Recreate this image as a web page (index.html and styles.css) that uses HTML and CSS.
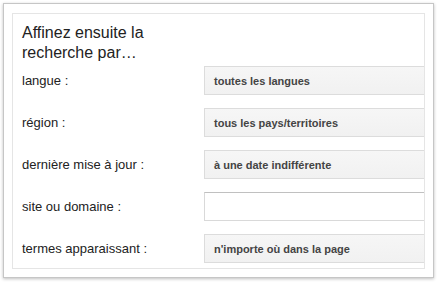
FILE: index.html
```html
<html>
<head>
    <link rel="stylesheet" href="styles.css">
</head>
<body>
<div class='frame'>
    <div class='panel'>
        <h2 class='title'>Affinez ensuite la<br>recherche par…</h2>
        <div class='rows'>
            <div class='label'>langue :</div>
            <div class='select'>toutes les langues</div>

            <div class='label'>région :</div>
            <div class='select'>tous les pays/territoires</div>

            <div class='label'>dernière mise à jour :</div>
            <div class='select'>à une date indifférente</div>

            <div class='label'>site ou domaine :</div>
            <div class='input'></div>

            <div class='label'>termes apparaissant :</div>
            <div class='select'>n'importe où dans la page</div>
        </div>
    </div>
</div>
</body>
</html>
```

FILE: styles.css
```css
body {
    margin: 0;
    background: #fff;
    font-family: "Liberation Sans", Arial, sans-serif;
}

.frame {
    margin: 3px;
    width: 431px;
    height: 275px;
    box-sizing: border-box;
    padding: 9px 8px;
    border: 1px solid #c6c6c6;
    box-shadow: 0 1px 3px rgba(0, 0, 0, 0.25);
}

.panel {
    height: 256px;
    box-sizing: border-box;
    border: 1px solid #e5e5e5;
    padding: 9px 0 0 9px;
    overflow: hidden;
}

.title {
    margin: 0;
    font-size: 16px;
    font-weight: normal;
    line-height: 20px;
    color: #222;
}

.rows {
    display: grid;
    grid-template-columns: 182px 240px;
    grid-row-gap: 13px;
    margin-top: 3px;
}

.label {
    font-size: 13px;
    color: #222;
    display: flex;
    align-items: center;
}

.select, .input {
    height: 29px;
    box-sizing: border-box;
}

.select {
    display: flex;
    align-items: center;
    padding-left: 9px;
    background: linear-gradient(#f6f6f6, #f1f1f1);
    border: 1px solid #dcdcdc;
    font-size: 11px;
    font-weight: bold;
    color: #444;
}

.input {
    background: #fff;
    border: 1px solid #d9d9d9;
    border-top-color: #c0c0c0;
}
```
